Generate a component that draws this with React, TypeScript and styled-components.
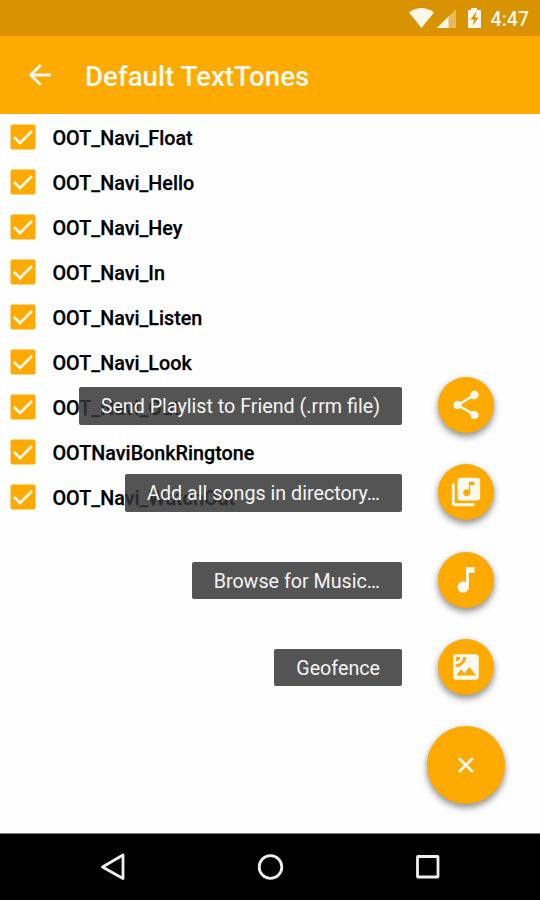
import React from "react";
import styled, { createGlobalStyle } from "styled-components";

const AMBER = "#ffaa00";

const GlobalStyle = createGlobalStyle`
  * { box-sizing: border-box; }
  body { margin: 0; background: #fff; font-family: Roboto, "Liberation Sans", sans-serif; }
`;

const Screen = styled.div`
  position: relative;
  display: flex;
  flex-direction: column;
  width: 540px;
  height: 900px;
  overflow: hidden;
  background: #fefefe;
`;

const StatusBar = styled.header`
  display: flex;
  flex: 0 0 36px;
  align-items: center;
  justify-content: flex-end;
  padding-right: 11px;
  background: #d99200;
  color: #fff8e8;
`;

const StatusIcons = styled.svg`
  width: 76px;
  height: 24px;
  margin-right: 6px;
`;

const Clock = styled.span`
  padding-top: 3px;
  font-size: 19.5px;
  font-weight: 500;
  line-height: 24px;
`;

const AppBar = styled.div`
  display: flex;
  flex: 0 0 78px;
  align-items: center;
  padding-left: 22px;
  background: ${AMBER};
  color: #fffaf0;
`;

const BackIcon = styled.svg`
  width: 36px;
  height: 36px;
  margin-right: 27px;
`;

const Title = styled.h1`
  margin: 3px 0 0;
  font-size: 27.7px;
  font-weight: 500;
  line-height: 36px;
`;

const SongList = styled.ul`
  flex: 1;
  margin: 0;
  padding: 0 0 0 10px;
  list-style: none;
`;

const SongRow = styled.li`
  display: flex;
  align-items: center;
  gap: 16.5px;
  height: 45px;
`;

const CheckBox = styled.svg`
  width: 26px;
  height: 26px;
`;

const SongName = styled.span`
  padding-top: 4px;
  font-size: 19.75px;
  font-weight: 500;
  line-height: 24px;
  color: #000;
  -webkit-text-stroke: 0.25px #000;
`;

const SpeedDial = styled.div`
  position: absolute;
  top: 377px;
  right: 35px;
  display: flex;
  flex-direction: column;
  align-items: flex-end;
`;

const Action = styled.div`
  display: flex;
  align-items: flex-start;
  height: 87.3px;
  padding-right: 11.5px;
`;

const ActionLabel = styled.span`
  height: 37.5px;
  margin: 10px 35.5px 0 0;
  padding: 0 22px;
  border-radius: 2px;
  background: rgba(51, 51, 51, 0.84);
  color: #f4f4f4;
  font-size: 19.7px;
  line-height: 40px;
  white-space: nowrap;
`;

const Fab = styled.button<{ $size: number }>`
  display: flex;
  align-items: center;
  justify-content: center;
  width: ${(p) => p.$size}px;
  height: ${(p) => p.$size}px;
  padding: 0;
  border: 0;
  border-radius: 50%;
  background: ${AMBER};
  color: #fffaf0;
  box-shadow: 0 4px 7px rgba(0, 0, 0, 0.38), 0 1px 6px rgba(0, 0, 0, 0.12);
`;

const FabIcon = styled.svg`
  width: 34px;
  height: 34px;
  fill: currentColor;
`;

const NavBar = styled.nav`
  display: flex;
  flex: 0 0 67px;
  align-items: center;
  justify-content: space-between;
  padding: 0 96px 0 97px;
  border-top: 1px solid #777;
  background: #000;
`;

const NavIcon = styled.svg`
  width: 32px;
  height: 32px;
  fill: none;
  stroke: #efefef;
  stroke-width: 2.8;
  stroke-linejoin: round;
`;

const songs = [
  "OOT_Navi_Float",
  "OOT_Navi_Hello",
  "OOT_Navi_Hey",
  "OOT_Navi_In",
  "OOT_Navi_Listen",
  "OOT_Navi_Look",
  "OOT_Navi_Out",
  "OOTNaviBonkRingtone",
  "OOT_Navi_WatchOut",
];

const actions = [
  {
    label: "Send Playlist to Friend (.rrm file)",
    icon: "M18 16.08c-.76 0-1.44.3-1.96.77L8.91 12.7c.05-.23.09-.46.09-.7s-.04-.47-.09-.7l7.05-4.11c.54.5 1.25.81 2.04.81 1.66 0 3-1.34 3-3s-1.34-3-3-3-3 1.34-3 3c0 .24.04.47.09.7L8.04 9.81C7.5 9.31 6.79 9 6 9c-1.66 0-3 1.34-3 3s1.34 3 3 3c.79 0 1.5-.31 2.04-.81l7.12 4.16c-.05.21-.08.43-.08.65 0 1.61 1.31 2.92 2.92 2.92s2.92-1.31 2.92-2.92-1.31-2.92-2.92-2.92z",
  },
  {
    label: "Add all songs in directory…",
    icon: "M20 2H8c-1.1 0-2 .9-2 2v12c0 1.1.9 2 2 2h12c1.1 0 2-.9 2-2V4c0-1.1-.9-2-2-2zm-2 5h-3v5.5c0 1.38-1.12 2.5-2.5 2.5S10 13.88 10 12.5s1.12-2.5 2.5-2.5c.57 0 1.08.19 1.5.51V5h4v2zM4 6H2v14c0 1.1.9 2 2 2h14v-2H4V6z",
  },
  {
    label: "Browse for Music…",
    icon: "M12 3v10.55c-.59-.34-1.27-.55-2-.55-2.21 0-4 1.79-4 4s1.79 4 4 4 4-1.79 4-4V7h4V3h-6z",
  },
  {
    label: "Geofence",
    icon: "M19 3H5c-1.1 0-2 .9-2 2v14c0 1.1.9 2 2 2h14c1.1 0 2-.9 2-2V5c0-1.1-.9-2-2-2zM5 4.99h3C8 6.65 6.66 8 5 8V4.99zM5 12v-2c2.76 0 5-2.25 5-5.01h2C12 8.86 8.87 12 5 12zm0 6l3.5-4.5 2.5 3.01L14.5 12l4.5 6H5z",
  },
];

export default function App() {
  return (
    <>
      <GlobalStyle />
      <Screen>
        <StatusBar>
          <StatusIcons viewBox="0 0 76 24" fill="currentColor">
            <path d="M0 6.5C7.3.5 17.7.5 25 6.5L12.5 22z" />
            <path d="M47 3V22H28z" opacity=".4" />
            <path d="M39.5 10.5V22H28z" />
            <path d="M59 4h3V2h6v2h4v18H59z" />
            <path d="M67.5 5.5l-6 8H65l-1.5 6 6-8H66z" fill="#d99200" />
          </StatusIcons>
          <Clock>4:47</Clock>
        </StatusBar>
        <AppBar>
          <BackIcon viewBox="0 0 36 36" fill="none" stroke="currentColor" strokeWidth="2.8">
            <path d="M29 18H9M18.8 8l-10 10 10 10" />
          </BackIcon>
          <Title>Default TextTones</Title>
        </AppBar>
        <SongList>
          {songs.map((song) => (
            <SongRow key={song}>
              <CheckBox viewBox="0 0 26 26">
                <rect x=".5" y=".5" width="25" height="25" rx="2" fill={AMBER} />
                <path d="M4 13l6 6L22 7" fill="none" stroke="#fff8e8" strokeWidth="2.8" />
              </CheckBox>
              <SongName>{song}</SongName>
            </SongRow>
          ))}
        </SongList>
        <NavBar>
          <NavIcon viewBox="0 0 32 32">
            <path d="M26 4v23.5L5.500 16z" />
          </NavIcon>
          <NavIcon viewBox="0 0 32 32">
            <circle cx="15.5" cy="16" r="11.3" />
          </NavIcon>
          <NavIcon viewBox="0 0 32 32">
            <rect x="5.5" y="5.5" width="20.5" height="20.5" rx=".5" />
          </NavIcon>
        </NavBar>
        <SpeedDial>
          {actions.map(({ label, icon }) => (
            <Action key={label}>
              <ActionLabel>{label}</ActionLabel>
              <Fab $size={56} aria-label={label}>
                <FabIcon viewBox="0 0 24 24">
                  <path d={icon} />
                </FabIcon>
              </Fab>
            </Action>
          ))}
          <Fab $size={78} aria-label="Close">
            <FabIcon viewBox="0 0 24 24">
              <path d="M7 7.200l9.800 9.800M16.800 7.200L7 17" stroke="currentColor" strokeWidth="2" />
            </FabIcon>
          </Fab>
        </SpeedDial>
      </Screen>
    </>
  );
}
